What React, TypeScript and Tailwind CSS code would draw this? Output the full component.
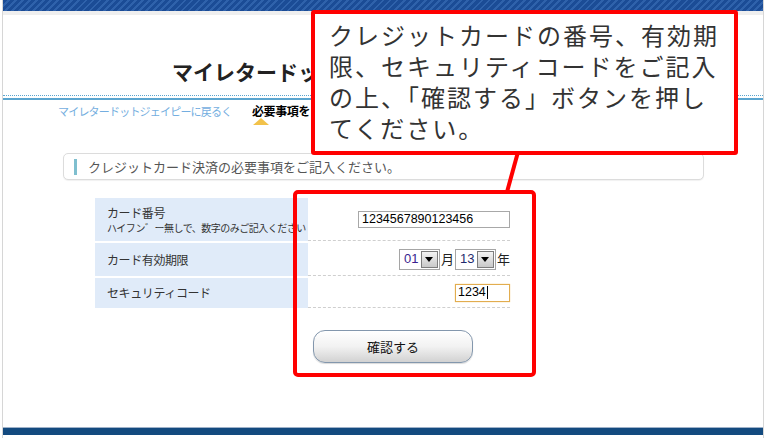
import React from 'react'

const jp = "font-['Noto_Sans_CJK_JP','Noto_Sans',sans-serif]"

function FakeSelect({ value, color }: { value: string; color: string }) {
  return (
    <div className="flex h-[21px] w-[41px] items-stretch border border-[#a5a5a5] bg-white">
      <span className={`flex flex-1 items-center pl-[4px] text-[13px] font-['Liberation_Sans',sans-serif] ${color}`}>{value}</span>
      <span className="my-[1px] mr-[1px] flex w-[17px] items-center justify-center border border-[#7d7d7d] bg-gradient-to-b from-[#f4f4f4] to-[#c9c9c9]">
        <span className="h-0 w-0 border-x-[4px] border-t-[5px] border-x-transparent border-t-black" />
      </span>
    </div>
  )
}

export default function App() {
  return (
    <div className={`relative h-[438px] w-[766px] overflow-hidden bg-white ${jp}`}>
      <div className="mx-[2px] flex h-full w-[762px] flex-col border-x border-[#d6d6d6]">
        {/* top stripe */}
        <div className="h-[11px] bg-[image:repeating-linear-gradient(135deg,#1b4c96_0px,#1b4c96_3px,#2f62ab_3px,#2f62ab_5px)]" />
        <div className="h-[4px] bg-[#efefef]" />

        {/* title (rest is hidden under the callout) */}
        <div className="mt-[42px] h-[28px] pl-[169px] text-[21px] font-bold leading-[28px] text-[#222]">
          マイレタードッ
        </div>
        <div className="mt-[10px] border-t border-dotted border-[#5aa5cf]" />
        <div className="mt-[2px] h-[2px] bg-[#5aa5cf]" />

        {/* breadcrumb */}
        <div className="mt-[3px] flex h-[16px] items-center pl-[55px] text-[11px] leading-[16px]">
          <span className="w-[194px] tracking-[-0.8px] text-[#74aee0]">マイレタードットジェイピーに戻るく</span>
          <span className="relative text-[12px] font-bold tracking-[-0.4px] text-black">
            必要事項を
            <span className="absolute left-[1px] top-[15px] h-0 w-0 border-x-[8px] border-b-[7px] border-x-transparent border-b-[#f2c24a]" />
          </span>
        </div>

        {/* section header */}
        <div className="ml-[60px] mt-[34px] flex h-[27px] w-[641px] items-center rounded-[5px] border border-[#dcdcdc] bg-white pl-[10px] shadow-[0_1px_1px_rgba(0,0,0,0.06)]">
          <span className="h-[16px] w-[3px] bg-[#7fbfcf]" />
          <span className="ml-[11px] text-[13px] text-[#555]">クレジットカード決済の必要事項をご記入ください。</span>
        </div>

        {/* form table */}
        <div className="ml-[92px] mt-[18px] flex w-[415px] flex-col gap-[2px]">
          <div className="flex h-[43px]">
            <div className="flex w-[213px] flex-col justify-center overflow-hidden whitespace-nowrap bg-[#e0ebf9] pl-[12px] text-[#333]">
              <span className="text-[12px] leading-[16px] tracking-[-0.4px]">カード番号</span>
              <span className="text-[10px] leading-[14px] tracking-[-0.5px]">ハイフン゛ー無しで、数字のみご記入ください</span>
            </div>
            <div className="flex flex-1 items-center justify-end border-b border-dashed border-[#cfcfcf]">
              <div className="flex h-[17px] w-[152px] items-center border border-[#a8a8a8] bg-white pl-[3px] font-['Liberation_Sans',sans-serif] text-[12.5px] text-black">
                1234567890123456
              </div>
            </div>
          </div>
          <div className="flex h-[33px]">
            <div className="flex w-[213px] items-center bg-[#e0ebf9] pl-[12px] text-[12px] tracking-[-0.4px] text-[#333]">
              カード有効期限
            </div>
            <div className="flex flex-1 items-center justify-end gap-[1px] border-b border-dashed border-[#cfcfcf] text-[13px] text-[#222]">
              <FakeSelect value="01" color="text-[#3a1f8f]" />
              <span>月</span>
              <FakeSelect value="13" color="text-[#1f2a6e]" />
              <span>年</span>
            </div>
          </div>
          <div className="flex h-[30px]">
            <div className="flex w-[213px] items-center bg-[#e0ebf9] pl-[12px] text-[12px] tracking-[-0.4px] text-[#333]">
              セキュリティコード
            </div>
            <div className="flex flex-1 items-center justify-end border-b border-dashed border-[#cfcfcf]">
              <div className="flex h-[18px] w-[55px] items-center border border-[#e2ad4f] bg-white pl-[2px] font-['Liberation_Sans',sans-serif] text-[12.5px] text-black shadow-[0_0_1px_#f0c070]">
                1234
                <span className="ml-[1px] h-[13px] w-px bg-black" />
              </div>
            </div>
          </div>
        </div>

        {/* button */}
        <div className="ml-[310px] mt-[22px]">
          <button className="flex h-[33px] w-[160px] items-center justify-center rounded-[12px] border border-[#8397ad] bg-gradient-to-b from-white via-[#f2f2f2] to-[#d2d2d2] text-[13px] text-[#111] shadow-[0_1px_1px_rgba(0,0,0,0.15)]">
            確認する
          </button>
        </div>

        {/* footer bar */}
        <div className="flex-1" />
        <div className="h-px bg-[#9fb2c9]" />
        <div className="h-[7px] bg-[#134a7f]" />
        <div className="h-[3px] bg-white" />
      </div>

      {/* connector */}
      <svg className="pointer-events-none absolute left-0 top-0" width="766" height="438">
        <line x1="518" y1="152" x2="507" y2="192" stroke="#ff0000" strokeWidth="4" />
      </svg>

      {/* callout text box */}
      <div className="absolute left-[311px] top-[10px] h-[145px] w-[427px] rounded-[3px] border-4 border-[#ff0000] bg-white pl-[14px] pt-[5px] text-[24px] font-normal leading-[31px] tracking-[2px] text-[#333]">
        クレジットカードの番号、有効期<br />
        限、セキュリティコードをご記入<br />
        の上、「確認する」ボタンを押し<br />
        てください。
      </div>

      {/* highlight box */}
      <div className="absolute left-[293px] top-[190px] h-[187px] w-[243px] rounded-[5px] border-4 border-[#ff0000]" />
    </div>
  )
}
